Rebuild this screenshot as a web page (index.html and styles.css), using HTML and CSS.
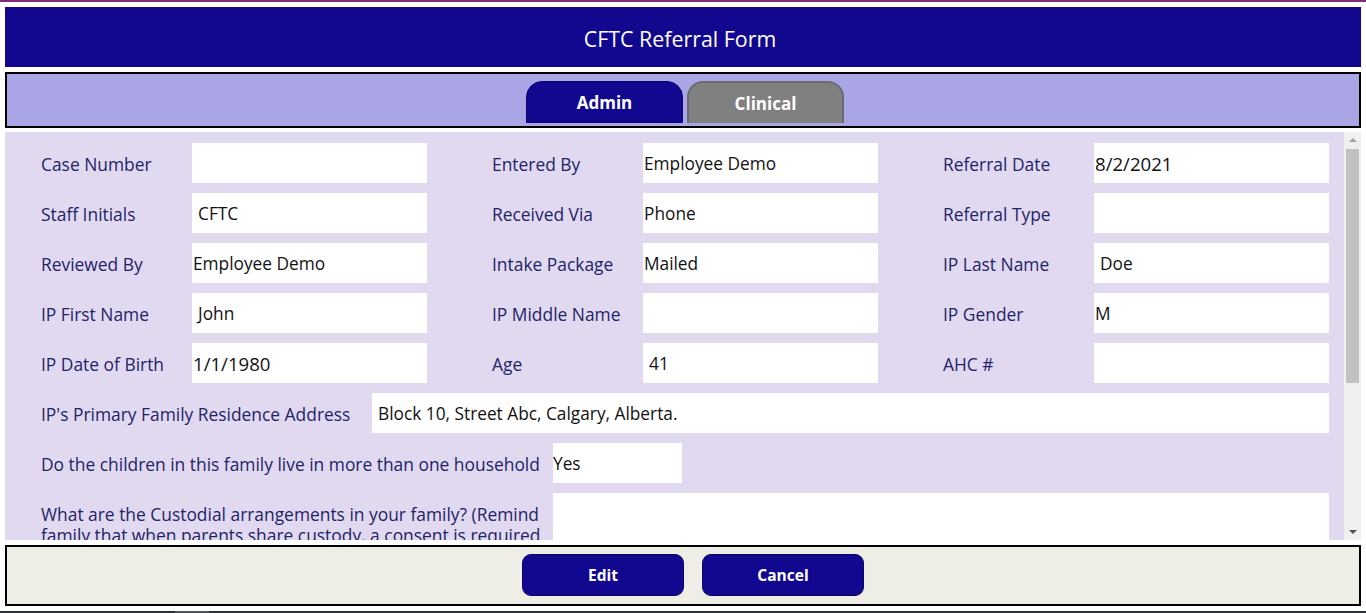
FILE: index.html
```html
<!DOCTYPE html>
<html lang="en">
<head>
<meta charset="utf-8">
<title>CFTC Referral Form</title>
<link rel="stylesheet" href="styles.css">
</head>
<body>
<div class="topline"></div>
<div class="app">
  <header class="title">CFTC Referral Form</header>
  <nav class="tabs">
    <button class="tab tab-active">Admin</button>
    <button class="tab tab-idle">Clinical</button>
  </nav>
  <main class="formwrap">
    <div class="form">
      <div class="row">
        <div class="field"><span class="label">Case Number</span><span class="input"></span></div>
        <div class="field"><span class="label">Entered By</span><span class="input">Employee Demo</span></div>
        <div class="field"><span class="label">Referral Date</span><span class="input date">8/2/2021</span></div>
      </div>
      <div class="row">
        <div class="field"><span class="label">Staff Initials</span><span class="input pad">CFTC</span></div>
        <div class="field"><span class="label">Received Via</span><span class="input">Phone</span></div>
        <div class="field"><span class="label">Referral Type</span><span class="input"></span></div>
      </div>
      <div class="row">
        <div class="field"><span class="label">Reviewed By</span><span class="input">Employee Demo</span></div>
        <div class="field"><span class="label">Intake Package</span><span class="input">Mailed</span></div>
        <div class="field"><span class="label">IP Last Name</span><span class="input pad">Doe</span></div>
      </div>
      <div class="row">
        <div class="field"><span class="label">IP First Name</span><span class="input pad">John</span></div>
        <div class="field"><span class="label">IP Middle Name</span><span class="input"></span></div>
        <div class="field"><span class="label">IP Gender</span><span class="input">M</span></div>
      </div>
      <div class="row">
        <div class="field"><span class="label">IP Date of Birth</span><span class="input date">1/1/1980</span></div>
        <div class="field"><span class="label">Age</span><span class="input pad">41</span></div>
        <div class="field"><span class="label">AHC #</span><span class="input"></span></div>
      </div>
      <div class="row">
        <div class="field"><span class="label label-addr">IP's Primary Family Residence Address</span><span class="input pad input-addr">Block 10, Street Abc, Calgary, Alberta.</span></div>
      </div>
      <div class="row">
        <div class="field"><span class="label label-wide">Do the children in this family live in more than one household</span><span class="input input-yes">Yes</span></div>
      </div>
      <div class="row">
        <div class="field"><span class="label label-wide">What are the Custodial arrangements in your family? (Remind family that when parents share custody, a consent is required from both parents)</span><span class="input input-tall"></span></div>
      </div>
    </div>
    <div class="scrollbar">
      <span class="arrow arrow-up"></span>
      <span class="track"><span class="thumb"></span></span>
      <span class="arrow arrow-down"></span>
    </div>
  </main>
  <footer class="actions">
    <button class="btn">Edit</button>
    <button class="btn">Cancel</button>
  </footer>
</div>
<div class="taskbar"><span class="seg"></span></div>
</body>
</html>
```
FILE: styles.css
```css
* { box-sizing: border-box; }
html, body { margin: 0; padding: 0; }
body {
  width: 1366px;
  height: 613px;
  overflow: hidden;
  background: #ffffff;
  font-family: "Open Sans", "Noto Sans", sans-serif;
  display: flex;
  flex-direction: column;
}
.topline { height: 2px; background: #7b2c7b; flex: none; }
.app {
  width: 1356px;
  margin: 5px 5px 0 5px;
  display: flex;
  flex-direction: column;
  flex: none;
}
.title {
  height: 60px;
  background: #12088f;
  color: #ffffff;
  font-size: 21.4px;
  display: flex;
  align-items: center;
  justify-content: center;
  padding: 3px 6px 0 0;
}
.tabs {
  margin-top: 5px;
  height: 56px;
  border: 2px solid #000000;
  background: #aaa5e5;
  display: flex;
  justify-content: center;
  align-items: flex-end;
  gap: 4px;
  padding: 0 0 3px 4px;
}
.tab {
  width: 157px;
  height: 42px;
  border-radius: 16px 16px 0 0;
  font-family: "Open Sans", sans-serif;
  font-weight: 700;
  font-size: 17px;
  color: #ffffff;
  padding: 0;
  border: 1px solid #0d0670;
}
.tab-active { background: #12088f; }
.tab-idle { background: #808080; border: 2px solid #6b6b6b; border-bottom: none; }
.formwrap {
  margin-top: 4px;
  height: 408px;
  display: flex;
  background: #e1d9f0;
  overflow: hidden;
}
.form {
  flex: 1;
  padding: 11px 0 0 36px;
  display: flex;
  flex-direction: column;
  gap: 10px;
  overflow: hidden;
}
.row { display: flex; gap: 65px; flex: none; }
.field { display: flex; flex: none; }
.label {
  width: 151px;
  padding-top: 11px;
  font-size: 17.4px;
  line-height: 20.5px;
  color: #1f2468;
}
.label-addr { width: 331px; }
.label-wide { width: 512px; padding-right: 4px; }
.input {
  width: 235px;
  height: 40px;
  background: #ffffff;
  color: #111111;
  font-size: 17.3px;
  line-height: 42px;
  padding-left: 1px;
  white-space: nowrap;
  overflow: hidden;
}
.input.pad { padding-left: 6px; }
.input.date { font-size: 18.6px; padding-left: 1px; }
.input-addr { width: 957px; }
.input-yes { width: 129px; padding-left: 0; }
.input-tall { width: 776px; height: 90px; }
.scrollbar {
  width: 17px;
  flex: none;
  background: #f0f0f0;
  display: flex;
  flex-direction: column;
  align-items: center;
}
.arrow { width: 0; height: 0; flex: none; }
.arrow-up {
  margin-top: 6px;
  border-left: 4px solid transparent;
  border-right: 4px solid transparent;
  border-bottom: 4px solid #a3a3a3;
}
.arrow-down {
  margin-bottom: 6px;
  border-left: 4px solid transparent;
  border-right: 4px solid transparent;
  border-top: 4px solid #505050;
}
.track { flex: 1; width: 100%; padding: 7px 2px 0 2px; }
.thumb { display: block; height: 234px; background: #c1c1c1; }
.actions {
  margin-top: 5px;
  height: 61px;
  border: 2px solid #000000;
  background: #eeede6;
  display: flex;
  justify-content: center;
  align-items: flex-start;
  gap: 18px;
  padding: 7px 0 0 20px;
}
.btn {
  width: 162px;
  height: 42px;
  background: #12088f;
  border: 1px solid #0b0566;
  border-radius: 9px;
  color: #ffffff;
  font-family: "Open Sans", sans-serif;
  font-weight: 700;
  font-size: 15.5px;
  padding: 0;
}
.taskbar {
  margin-top: 5px;
  height: 2px;
  background: #263238;
  position: relative;
  flex: none;
}
.seg {
  position: absolute;
  left: 175px;
  top: 0;
  width: 34px;
  height: 2px;
  background: #4b555a;
}
```
